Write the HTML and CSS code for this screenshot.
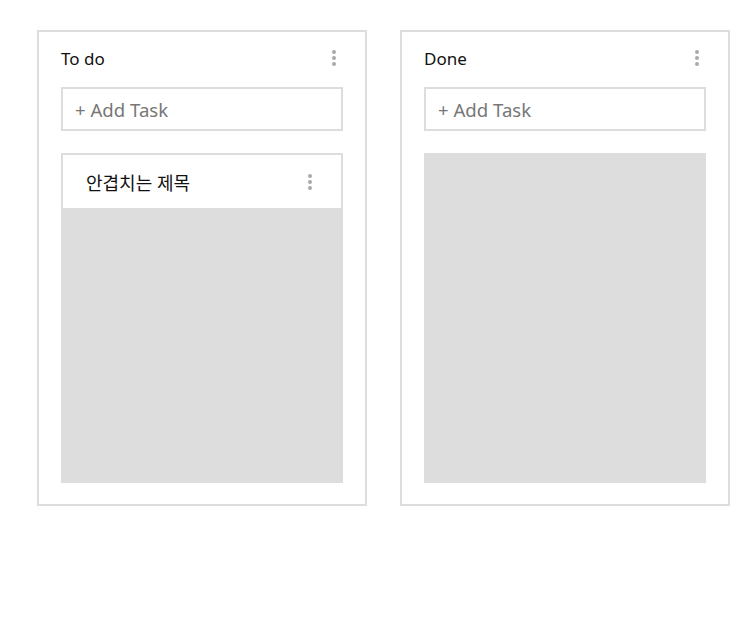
FILE: index.html
```html
<!DOCTYPE html>
<html lang="ko">
<head>
<meta charset="utf-8">
<title>Board</title>
<link rel="stylesheet" href="styles.css">
</head>
<body>
<div class="board">
  <section class="column">
    <header class="column-header">
      <h2 class="column-title">To do</h2>
      <span class="kebab"><i></i><i></i><i></i></span>
    </header>
    <div class="add-task">+ Add Task</div>
    <div class="task-list">
      <div class="card">
        <span class="card-title">안겹치는 제목</span>
        <span class="kebab"><i></i><i></i><i></i></span>
      </div>
    </div>
  </section>
  <section class="column">
    <header class="column-header">
      <h2 class="column-title">Done</h2>
      <span class="kebab"><i></i><i></i><i></i></span>
    </header>
    <div class="add-task">+ Add Task</div>
    <div class="task-list"></div>
  </section>
</div>
</body>
</html>
```
FILE: styles.css
```css
html, body {
  margin: 0;
  padding: 0;
  background: #fff;
}
body {
  font-family: "Noto Sans", "Noto Sans CJK KR", sans-serif;
  color: #111;
}
.board {
  display: flex;
  gap: 33px;
  padding: 30px 0 0 37px;
  align-items: flex-start;
}
.column {
  box-sizing: border-box;
  width: 330px;
  border: 2px solid #ddd;
  padding: 0 22px 21px;
}
.column-header {
  height: 55px;
  display: flex;
  align-items: center;
  justify-content: space-between;
  padding-bottom: 3px;
  box-sizing: border-box;
}
.column-title {
  margin: 0;
  font-size: 17px;
  font-weight: 400;
  line-height: 1;
}
.kebab {
  display: flex;
  flex-direction: column;
  gap: 2px;
  margin-right: 7px;
}
.kebab i {
  display: block;
  width: 4px;
  height: 4px;
  border-radius: 50%;
  background: #aaa;
}
.add-task {
  box-sizing: border-box;
  height: 44px;
  border: 2px solid #ddd;
  padding: 0 12px;
  display: flex;
  align-items: center;
  font-size: 18.6px;
  color: #777;
}
.task-list {
  margin-top: 22px;
  height: 330px;
  background: #ddd;
}
.card {
  box-sizing: border-box;
  height: 57px;
  border: 2px solid #ddd;
  background: #fff;
  display: flex;
  align-items: center;
  justify-content: space-between;
  padding: 0 29px 0 23px;
}
.card-title {
  font-size: 18px;
}
.card .kebab {
  margin-right: 0;
}
```
